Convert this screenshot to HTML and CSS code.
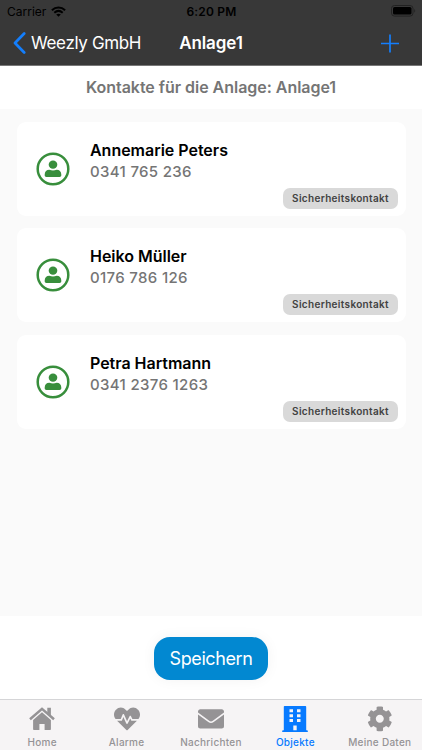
FILE: index.html
```
<!DOCTYPE html>
<html lang="de">
<head>
    <meta charset="UTF-8">
    <meta name="viewport" content="width=device-width, initial-scale=1.0">
    <title>Anlage1</title>
    <link rel="stylesheet" href="styles.css">
</head>
<body>
    <svg class="sprite" width="0" height="0">
        <symbol id="icon-user" viewBox="0 0 34 34">
            <circle cx="17" cy="17" r="15.3" fill="none" stroke="currentColor" stroke-width="2.5"/>
            <ellipse cx="17" cy="12.7" rx="4.3" ry="4.1" fill="currentColor"/>
            <path d="M13.300 17.800c1.300.4 2.400.6 3.700.6s2.400-.2 3.700-.6c2.700 0 4.600 2 4.600 4.600v.8c0 1-.7 1.700-1.700 1.700H10.400c-1 0-1.700-.7-1.700-1.700v-.8c0-2.600 1.900-4.600 4.600-4.600z" fill="currentColor"/>
        </symbol>
    </svg>

    <header>
        <div class="status-bar">
            <div class="carrier">
                <span>Carrier</span>
                <svg width="15" height="11" viewBox="0 0 15 11">
                    <path d="M.9 4.300C4.700.7 10.300.7 14.100 4.300M3.300 6.700c2.500-2.200 5.900-2.200 8.400 0" fill="none" stroke="#000" stroke-width="2"/>
                    <path d="M7.500 10.800L5.200 8.500c1.400-1.100 3.200-1.100 4.600 0z"/>
                </svg>
            </div>
            <span class="time">6:20 PM</span>
            <svg class="battery" width="25" height="12" viewBox="0 0 25 12">
                <rect x=".5" y=".5" width="21.500" height="10.600" rx="3" fill="none" stroke="#222"/>
                <rect x="2" y="2" width="18.500" height="7.600" rx="1.600"/>
                <path d="M23.300 4v3.600c1.200-.5 1.200-3.100 0-3.600z" fill="#222"/>
            </svg>
        </div>
        <nav class="nav-bar">
            <a class="back">
                <svg width="13" height="22" viewBox="0 0 13 22">
                    <path d="M11.200 1.500L2 11l9.200 9.500" fill="none" stroke="#147efb" stroke-width="2.700" stroke-linecap="round" stroke-linejoin="round"/>
                </svg>
                <span>Weezly GmbH</span>
            </a>
            <h1>Anlage1</h1>
            <a class="add">
                <svg width="18" height="19" viewBox="0 0 18 19">
                    <path d="M9 .5v18M0 9.500h18" stroke="#147efb" stroke-width="1.700"/>
                </svg>
            </a>
        </nav>
    </header>

    <h2>Kontakte für die Anlage: Anlage1</h2>

    <main class="contacts">
        <div class="card">
            <svg class="avatar"><use href="#icon-user"/></svg>
            <div class="info">
                <h3>Annemarie Peters</h3>
                <p>0341 765 236</p>
            </div>
            <span class="tag">Sicherheitskontakt</span>
        </div>
        <div class="card">
            <svg class="avatar"><use href="#icon-user"/></svg>
            <div class="info">
                <h3>Heiko Müller</h3>
                <p>0176 786 126</p>
            </div>
            <span class="tag">Sicherheitskontakt</span>
        </div>
        <div class="card">
            <svg class="avatar"><use href="#icon-user"/></svg>
            <div class="info">
                <h3>Petra Hartmann</h3>
                <p>0341 2376 1263</p>
            </div>
            <span class="tag">Sicherheitskontakt</span>
        </div>
    </main>

    <div class="actions">
        <button type="button">Speichern</button>
    </div>

    <nav class="tab-bar">
        <a class="tab">
            <svg width="26" height="26" viewBox="0 0 26 26">
                <path d="M13 6.300l8.900 7.600v9.400c0 .4-.3.700-.7.700h-5.600v-6h-5.200v6H4.800c-.4 0-.7-.3-.7-.7v-9.400z"/>
                <path d="M1 13.200L13 2.900l12 10.300" fill="none" stroke="currentColor" stroke-width="2.500"/>
                <path d="M18.300 1.800h3.600v8.200l-3.600-2.900z"/>
            </svg>
            <span>Home</span>
        </a>
        <a class="tab">
            <svg width="26" height="26" viewBox="0 0 512 512">
                <path d="M320.200 243.800l-49.700 99.400c-6 12.100-23.400 11.700-28.900-.6l-56.900-126.300-30 71.700H60.600l182.500 186.500c7.100 7.300 18.600 7.300 25.700 0L451.400 288H342.300l-22.100-44.200zM473.700 73.900l-2.400-2.500c-51.500-52.600-135.800-52.600-187.400 0L256 100l-27.900-28.500c-51.500-52.700-135.900-52.700-187.400 0l-2.400 2.400C-10.400 123.700-12.500 203 31 256h102.400l35.900-86.200c5.400-12.900 23.600-13.200 29.400-.4l58.200 129.300 49-97.900c5.900-11.800 22.700-11.800 28.600 0l27.600 55.200H481c43.500-53 41.400-132.300-7.300-182.100z"/>
            </svg>
            <span>Alarme</span>
        </a>
        <a class="tab">
            <svg width="26" height="26" viewBox="0 0 26 26">
                <path d="M2.300 3.200h21.400c1.300 0 2.300 1 2.300 2.300v1.100L14.800 14.800c-1.200.9-2.400.9-3.600 0L0 6.600V5.500c0-1.300 1-2.300 2.300-2.300z"/>
                <path d="M0 8.400l10.300 7.500c1.800 1.300 3.600 1.300 5.400 0L26 8.400v11.900c0 1.300-1 2.300-2.300 2.300H2.300C1 22.600 0 21.600 0 20.300z"/>
            </svg>
            <span>Nachrichten</span>
        </a>
        <a class="tab active">
            <svg width="26" height="26" viewBox="0 0 26 26">
                <path fill-rule="evenodd" d="M2.800 0h20.400c.6 0 1 .4 1 1v23.200h.9c.4 0 .7.300.7.700V26H.2v-1.100c0-.4.300-.7.700-.7h.9V1c0-.6.400-1 1-1zM7.500 3.300v3h3.500v-3zM15 3.300v3h3.500v-3zM7.500 8.200v3H11v-3zM15 8.200v3h3.500v-3zM7.500 13.100v3H11v-3zM15 13.100v3h3.500v-3zM11.300 19.500v4.700h3.400v-4.700z"/>
            </svg>
            <span>Objekte</span>
        </a>
        <a class="tab">
            <svg width="26" height="26" viewBox="0 0 520 520">
                <path d="M487.400 315.700l-42.600-24.600c4.300-23.200 4.300-47 0-70.200l42.600-24.600c4.900-2.800 7.100-8.600 5.500-14-11.100-35.600-30-67.800-54.700-94.600-3.800-4.100-10-5.100-14.800-2.300L380.800 110c-17.900-15.400-38.500-27.300-60.800-35.100V25.800c0-5.600-3.900-10.500-9.400-11.700-36.700-8.200-74.300-7.800-109.200 0-5.500 1.200-9.400 6.100-9.400 11.700V75c-22.200 7.900-42.800 19.800-60.800 35.100L88.700 85.500c-4.900-2.800-11-1.900-14.800 2.300-24.700 26.700-43.600 58.900-54.700 94.600-1.700 5.400.6 11.200 5.500 14L67.300 221c-4.300 23.200-4.300 47 0 70.200l-42.600 24.600c-4.900 2.800-7.100 8.600-5.500 14 11.100 35.600 30 67.800 54.700 94.600 3.800 4.100 10 5.100 14.800 2.300l42.600-24.600c17.900 15.400 38.500 27.300 60.800 35.100v49.200c0 5.600 3.900 10.500 9.400 11.700 36.700 8.200 74.300 7.800 109.200 0 5.500-1.200 9.400-6.100 9.400-11.700v-49.200c22.200-7.900 42.800-19.800 60.800-35.100l42.600 24.600c4.900 2.800 11 1.900 14.800-2.300 24.700-26.700 43.600-58.900 54.700-94.600 1.500-5.500-.7-11.300-5.600-14.100zM256 336c-44.100 0-80-35.900-80-80s35.900-80 80-80 80 35.900 80 80-35.900 80-80 80z"/>
            </svg>
            <span>Meine Daten</span>
        </a>
    </nav>
</body>
</html>
```
FILE: styles.css
```
:root {
    --header-color: #383838;
    --accent-color: #077aff;
    --button-color: #0288d1;
    --muted-color: #757575;
    --tab-color: #959395;
    --green: #388e3c;
}

* {
    box-sizing: border-box;
}

body {
    margin: 0;
    height: 750px;
    display: flex;
    flex-direction: column;
    overflow: hidden;
    font-family: Inter, "Liberation Sans", sans-serif;
    background-color: #fff;
    color: #000;
}

h1, h2, h3, p {
    margin: 0;
}

.sprite {
    display: none;
}

/* Header */
header {
    height: 66px;
    flex-shrink: 0;
    background-color: var(--header-color);
    border-bottom: 1px solid #777;
}

.status-bar {
    height: 22px;
    padding: 0 6px 0 7px;
    display: grid;
    grid-template-columns: 1fr auto 1fr;
    align-items: center;
    font-size: 12px;
}

.carrier {
    display: flex;
    align-items: center;
    gap: 5px;
}

.time {
    font-weight: 600;
    letter-spacing: 0.2px;
}

.battery {
    justify-self: end;
}

.nav-bar {
    height: 42px;
    padding: 0 23px 0 13px;
    display: grid;
    grid-template-columns: 130px 1fr 120px;
    align-items: center;
    color: #fff;
}

.back {
    display: flex;
    align-items: center;
    gap: 5px;
    font-size: 17px;
    letter-spacing: -0.35px;
    white-space: nowrap;
}

.back svg {
    flex-shrink: 0;
}

.nav-bar h1 {
    text-align: center;
    font-size: 17px;
    font-weight: 600;
    letter-spacing: -0.1px;
}

.add {
    justify-self: end;
    display: flex;
}

h2 {
    height: 43px;
    flex-shrink: 0;
    line-height: 43px;
    text-align: center;
    font-size: 16px;
    font-weight: 600;
    letter-spacing: -0.03px;
    color: var(--muted-color);
}

/* Contact list */
.contacts {
    flex: 1;
    display: flex;
    flex-direction: column;
    gap: 12.300px;
    padding: 13px 16.500px 0;
    background-color: #fafafa;
}

.card {
    height: 94px;
    padding: 0 7.500px 7px 19.500px;
    display: flex;
    background-color: #fff;
    border-radius: 9px;
}

.avatar {
    width: 34px;
    height: 34px;
    margin-top: 30px;
    color: var(--green);
}

.info {
    flex: 1;
    padding: 18px 0 0 20px;
    white-space: nowrap;
}

.info h3 {
    font-size: 16px;
    font-weight: 600;
    line-height: 21px;
    letter-spacing: -0.02px;
}

.info p {
    font-size: 15px;
    font-weight: 500;
    line-height: 21px;
    letter-spacing: 0.330px;
    color: var(--muted-color);
}

.tag {
    align-self: flex-end;
    width: 115px;
    height: 21px;
    line-height: 21px;
    margin-left: -115px;
    text-align: center;
    font-size: 10px;
    font-weight: 600;
    letter-spacing: 0.330px;
    color: #424242;
    background-color: #d9d9d9;
    border-radius: 7px;
}

/* Save button */
.actions {
    height: 83px;
    flex-shrink: 0;
    padding-top: 1px;
    display: flex;
    align-items: center;
    justify-content: center;
}

.actions button {
    width: 114px;
    height: 43px;
    padding: 0;
    border: none;
    border-radius: 16px;
    font-family: inherit;
    font-size: 18px;
    letter-spacing: -0.4px;
    color: #fff;
    background-color: var(--button-color);
    box-shadow: 0 0 14px rgba(0, 0, 0, 0.05);
}

/* Tab bar */
.tab-bar {
    height: 51px;
    flex-shrink: 0;
    display: grid;
    grid-template-columns: repeat(5, 1fr);
    background-color: #f6f4f5;
    border-top: 1px solid #d5d5d7;
}

.tab {
    display: flex;
    flex-direction: column;
    align-items: center;
    padding-top: 6px;
    font-size: 10px;
    font-weight: 500;
    line-height: 12px;
    letter-spacing: 0.270px;
    white-space: nowrap;
    color: var(--tab-color);
}

.tab svg {
    fill: currentColor;
    margin-bottom: 4px;
}

.tab.active {
    color: var(--accent-color);
}
```
